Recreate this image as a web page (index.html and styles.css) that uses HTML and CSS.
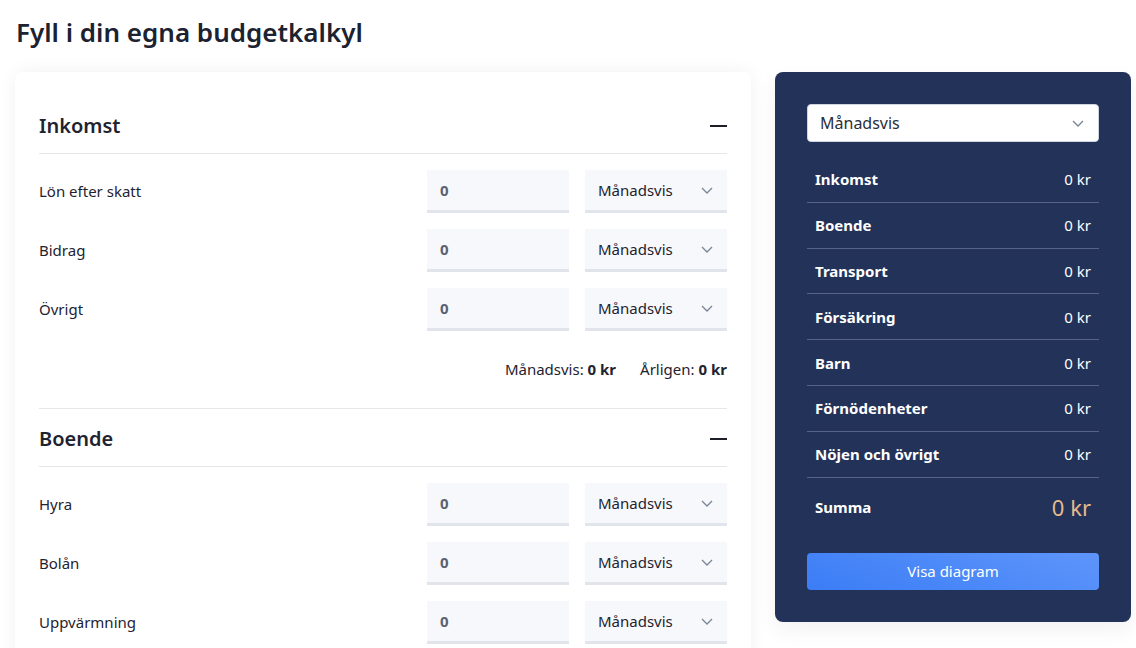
FILE: index.html
```html
<!DOCTYPE html>
<html lang="sv">
<head>
<meta charset="utf-8">
<title>Budgetkalkyl</title>
<link rel="stylesheet" href="styles.css">
</head>
<body>
<h1 class="title">Fyll i din egna budgetkalkyl</h1>
<div class="layout">
  <main class="card">
    <section class="group">
      <div class="group-head"><h2>Inkomst</h2><span class="minus"></span></div>
      <div class="rows">
        <div class="row"><span class="label">Lön efter skatt</span><div class="field">0</div><div class="select">Månadsvis<svg class="chev" viewBox="0 0 12 7"><path d="M1 1l5 5 5-5"/></svg></div></div>
        <div class="row"><span class="label">Bidrag</span><div class="field">0</div><div class="select">Månadsvis<svg class="chev" viewBox="0 0 12 7"><path d="M1 1l5 5 5-5"/></svg></div></div>
        <div class="row"><span class="label">Övrigt</span><div class="field">0</div><div class="select">Månadsvis<svg class="chev" viewBox="0 0 12 7"><path d="M1 1l5 5 5-5"/></svg></div></div>
      </div>
      <div class="totals"><span>Månadsvis: <b>0 kr</b></span><span>Årligen: <b>0 kr</b></span></div>
    </section>
    <section class="group">
      <div class="group-head"><h2>Boende</h2><span class="minus"></span></div>
      <div class="rows">
        <div class="row"><span class="label">Hyra</span><div class="field">0</div><div class="select">Månadsvis<svg class="chev" viewBox="0 0 12 7"><path d="M1 1l5 5 5-5"/></svg></div></div>
        <div class="row"><span class="label">Bolån</span><div class="field">0</div><div class="select">Månadsvis<svg class="chev" viewBox="0 0 12 7"><path d="M1 1l5 5 5-5"/></svg></div></div>
        <div class="row"><span class="label">Uppvärmning</span><div class="field">0</div><div class="select">Månadsvis<svg class="chev" viewBox="0 0 12 7"><path d="M1 1l5 5 5-5"/></svg></div></div>
      </div>
    </section>
  </main>
  <aside class="summary">
    <div class="sum-select">Månadsvis<svg class="chev" viewBox="0 0 12 7"><path d="M1 1l5 5 5-5"/></svg></div>
    <ul class="sum-list">
      <li><span>Inkomst</span><span class="val">0 kr</span></li>
      <li><span>Boende</span><span class="val">0 kr</span></li>
      <li><span>Transport</span><span class="val">0 kr</span></li>
      <li><span>Försäkring</span><span class="val">0 kr</span></li>
      <li><span>Barn</span><span class="val">0 kr</span></li>
      <li><span>Förnödenheter</span><span class="val">0 kr</span></li>
      <li><span>Nöjen och övrigt</span><span class="val">0 kr</span></li>
      <li class="total"><span>Summa</span><span class="val">0 kr</span></li>
    </ul>
    <button class="btn">Visa diagram</button>
  </aside>
</div>
</body>
</html>
```
FILE: styles.css
```css
* { box-sizing: border-box; }
html, body { margin: 0; padding: 0; }
body {
  font-family: "Noto Sans", "Open Sans", sans-serif;
  color: #1f2330;
  background: #fff;
  padding: 0 5px 0 15px;
  overflow: hidden;
  height: 648px;
}
.title {
  margin: 0;
  padding: 15px 0 0 1px;
  height: 72px;
  font-size: 26px;
  font-weight: 600;
  line-height: 34px;
  color: #1c2230;
}
.layout {
  display: flex;
  gap: 24px;
  align-items: flex-start;
}
.card {
  width: 736px;
  background: #fff;
  border-radius: 8px;
  box-shadow: 0 0 18px rgba(30, 40, 70, 0.06);
  padding: 32px 24px 0;
  height: 600px;
}
.group-head {
  display: flex;
  justify-content: space-between;
  align-items: center;
  height: 50px;
  border-bottom: 1px solid #e6e7eb;
  padding-bottom: 5px;
}
.group-head h2 {
  margin: 0;
  font-size: 20px;
  font-weight: 600;
  line-height: 28px;
}
.minus {
  width: 17px;
  height: 2px;
  background: #1c1f26;
}
.rows {
  display: flex;
  flex-direction: column;
  gap: 16px;
  padding-top: 16px;
}
.row {
  display: flex;
  align-items: center;
  gap: 16px;
}
.label {
  flex: 1;
  font-size: 15px;
  color: #1f2330;
  padding-bottom: 2px;
}
.field, .select {
  width: 142px;
  height: 43px;
  background: #f6f8fc;
  border-bottom: 3px solid #e1e4eb;
  display: flex;
  align-items: center;
  padding: 0 12px 0 13px;
  font-size: 15px;
}
.field {
  font-weight: 700;
  color: #5c6270;
}
.select {
  justify-content: space-between;
  color: #1f2330;
  padding-right: 14px;
}
.chev {
  width: 12px;
  height: 7px;
  fill: none;
  stroke: #7a8497;
  stroke-width: 1.3;
}
.totals {
  display: flex;
  justify-content: flex-end;
  gap: 24px;
  font-size: 15px;
  padding: 28px 0 29px;
  border-bottom: 1px solid #e6e7eb;
  margin-bottom: 8px;
}
.totals b { font-weight: 700; }
.summary {
  width: 356px;
  background: #223259;
  border-radius: 8px;
  padding: 32px;
  color: #fff;
  box-shadow: 0 8px 20px rgba(30, 40, 70, 0.06);
}
.sum-select {
  height: 38px;
  background: #fff;
  border-radius: 4px;
  border: 1px solid #cfd5e0;
  display: flex;
  align-items: center;
  justify-content: space-between;
  padding: 0 14px 0 12px;
  color: #2a2f3a;
  font-size: 16px;
}
.sum-list {
  list-style: none;
  margin: 15px 0 0;
  padding: 0;
}
.sum-list li {
  display: flex;
  justify-content: space-between;
  align-items: center;
  height: 45.8px;
  padding: 0 8px;
  border-bottom: 1px solid #56628a;
  font-size: 15px;
}
.sum-list li span:first-child { font-weight: 700; }
.sum-list .val { font-weight: 400; }
.sum-list li.total {
  border-bottom: none;
  height: 59px;
}
.sum-list li.total .val {
  font-size: 22px;
  color: #e8b98c;
}
.btn {
  margin-top: 16px;
  width: 100%;
  height: 37px;
  border: none;
  border-radius: 4px;
  background: linear-gradient(20deg, #3b7df6 0%, #5e95fa 100%);
  color: #fff;
  font-family: inherit;
  font-size: 15px;
}
```
